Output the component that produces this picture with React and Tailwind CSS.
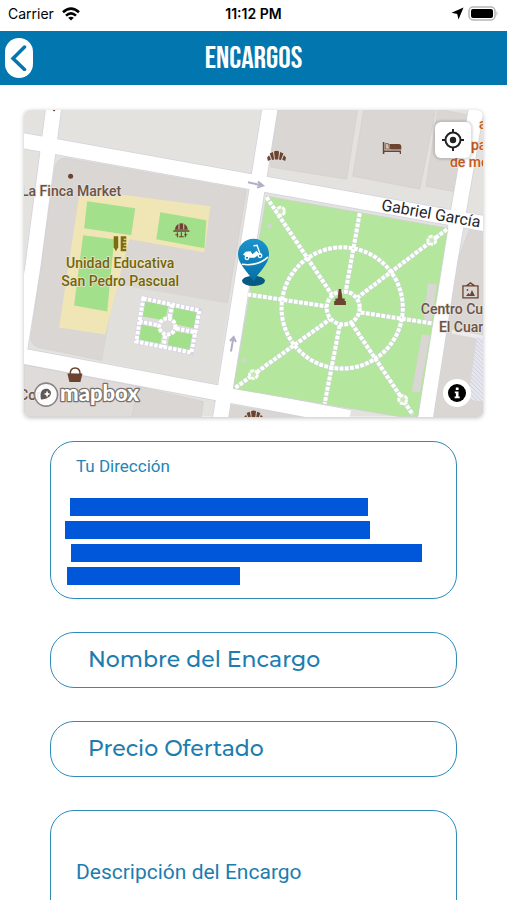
import React from 'react';

const BLOCK = '#dad6d4';
const GREEN = '#a3e08c';

const parkPaths = [
  'M267 197L332 294',
  'M447 229L358 297',
  'M360 213L346 291',
  'M248 294L327 306',
  'M361 312L433 323',
  'M236 387L330 319',
  'M352 323L413 414',
  'M340 325L325 403',
];

const parkLoops = [
  [281, 211],
  [432, 240],
  [254, 374],
  [403, 399],
];

function Croissant({ x, y }) {
  return (
    <g transform={`translate(${x} ${y})`} fill="#6b432e">
      <path d="M-2.5 -4.5Q0 -6 2.5 -4.5L1.6 3.5H-1.6Z" />
      <path d="M-6.8 -2.6L-3.6 -4L-2.4 3.5L-4.4 4Z" />
      <path d="M6.8 -2.6L3.6 -4L2.4 3.5L4.4 4Z" />
      <path d="M-9.4 1.4L-7.4 -.8L-5.6 3.4L-8.6 5Z" />
      <path d="M9.4 1.4L7.4 -.8L5.6 3.4L8.6 5Z" />
    </g>
  );
}

function MapDrawing() {
  return (
    <svg viewBox="25 110 458 306" className="block h-auto w-full" role="img" aria-label="Mapa">
      <defs>
        <pattern id="hatch" width="3" height="3" patternUnits="userSpaceOnUse" patternTransform="rotate(-45)">
          <rect width="3" height="3" fill="#e6e6ee" />
          <path d="M0 0V3" stroke="#cfcfdf" strokeWidth="1.4" />
        </pattern>
        <linearGradient id="pin" x1="0" y1="0" x2="0" y2="1">
          <stop offset="0" stopColor="#1c93cb" />
          <stop offset="1" stopColor="#0670a8" />
        </linearGradient>
      </defs>

      <rect x="25" y="110" width="458" height="306" fill="#e3e2df" />

      {/* city blocks */}
      <g fill={BLOCK} stroke="#d2cecd" strokeWidth=".6">
        <path d="M277 109H358L347 179L271 167Z" />
        <path d="M364 109H436L420 189L353 176Z" />
        <path d="M438 109L468 115L457 192L426 186Z" />
        <path d="M67 158L247 190L228 303L116 286L103 360L40 347Q31 345 32 336L56 167Q58 158 67 158Z" />
        <path d="M116 284L229 303L217 387L103 360Z" fill="#e1dfdc" stroke="none" />
        <path d="M25 364L139 386L133 416H25Z" fill="#dedbd9" />
        <path d="M139 386L204 401L202 416H133Z" />
        <path d="M228 404L302 416H226Z" />
        <path d="M470 228L483 231V416H433L457 262Z" />
      </g>
      <path d="M452 331L483 337" stroke="#ececee" strokeWidth="4" />
      <path d="M477 337L483 338V401L468 399Z" fill="url(#hatch)" />

      {/* school grounds */}
      <path d="M81 189L211 206L205 252L130 239L118 286L106 334L60 327Z" fill="#f0e5b4" />
      <g fill={GREEN}>
        <path d="M88 201L136 208L132 235L85 228Z" />
        <path d="M161 212L207 220L205 248L157 239Z" />
        <path d="M84 235L115 239L108 311L75 305Z" />
      </g>

      {/* streets */}
      <g stroke="#d3d2dc" strokeWidth="16.5" fill="none">
        <path d="M55 105L34 265L19 360" />
        <path d="M20 140L488 224" />
        <path d="M271 105L221 418" />
        <path d="M20 355L350 417" />
        <path d="M477 105L450 260L425 420" />
      </g>
      <g stroke="#fff" strokeWidth="15" fill="none">
        <path d="M55 105L34 265L19 360" />
        <path d="M20 140L488 224" />
        <path d="M271 105L221 418" />
        <path d="M20 355L350 417" />
        <path d="M477 105L450 260L425 420" />
      </g>

      {/* small garden */}
      <g fill={GREEN}>
        <path d="M146 301L169 305L166 320L143 316Z" />
        <path d="M175 306L198 311L195 328L172 323Z" />
        <path d="M142 324L164 328L161 344L139 340Z" />
        <path d="M171 330L194 334L190 350L168 346Z" />
      </g>
      <circle cx="168" cy="326" r="9" fill="#dddbe3" />
      <path
        d="M144 298L200 310L192 352L137 341ZM173 304L164 347M140 321L197 332"
        fill="none"
        stroke="#d5d3e2"
        strokeWidth="5"
      />
      <g fill="none" stroke="#fff" strokeWidth="4" strokeDasharray="3.4 1.4">
        <path d="M144 298L200 310L192 352L137 341ZM173 304L170 318M166 335L164 347M140 321L160 325M177 328L197 332" />
        <circle cx="168" cy="326" r="8" />
      </g>
      <circle cx="168" cy="326" r="6" fill="#dddbd9" />

      {/* park */}
      <path d="M267 196L448 228L418 416H400L234 388Z" fill="#b4e69e" stroke="#c9d3c9" strokeWidth=".8" />
      <path d="M428 283L437 284L431 323L424 321Z" fill={BLOCK} />
      <path d="M422 334L430 335L420 392L412 391Z" fill={BLOCK} />
      <g fill="none" stroke="#c6dac9" strokeWidth="4.8">
        {parkPaths.map((d) => (
          <path key={d} d={d} />
        ))}
        <circle cx="342.5" cy="307.5" r="60.5" />
        <circle cx="343.5" cy="307.5" r="16.5" />
      </g>
      <g fill="none" stroke="#fff" strokeWidth="4" strokeDasharray="3.8 1.4">
        {parkPaths.map((d) => (
          <path key={d} d={d} />
        ))}
        <circle cx="342.5" cy="307.5" r="60.5" />
        <circle cx="343.5" cy="307.5" r="16.5" />
      </g>
      {parkLoops.map(([x, y]) => (
        <circle key={x} cx={x} cy={y} r="4" fill="#c8e8bb" stroke="#fff" strokeWidth="2.8" strokeDasharray="4 1" />
      ))}
      <circle cx="270" cy="226" r="2.4" fill="#cfd6cf" />
      <circle cx="245" cy="360" r="2.4" fill="#cfd6cf" />

      {/* one-way arrows */}
      <g fill="none" stroke="#b3aec6" strokeWidth="2">
        <path d="M248.500 182L263 185.500M258.500 181.500L263.500 185.500L257.500 187.500" />
        <path d="M231.500 351L234 337M230.500 340.500L234.200 336.500L236.500 341.500" />
      </g>

      {/* places */}
      <Croissant x={277} y={156} />
      <Croissant x={254} y={415} />
      <g fill="#6b432e">
        <circle cx="71.500" cy="176" r="2.500" />
        <circle cx="55" cy="110" r="1.200" />
        <path d="M383 142h1.600v8.500h16.600v3.500h-1.300v-2.100h-15.300v2.100H383ZM389.500 144H399Q401.500 144 401.500 147v2.500H390.500Z" />
        <path d="M385.500 143.500h3l1.500 5.500h-4.500Z" fill="#cdbfb4" stroke="#6b432e" strokeWidth=".7" />
        <path d="M339 288.500h2.600l1 9.500h2.400v2.500h1.200v4.200h-11.700v-4.200h1.200v-2.500h2.300Z" />
        <path d="M68.300 373h15l-2 8.500h-11Z" />
        <path d="M71 374Q71 367.500 76 367.500T81 374" fill="none" stroke="#6b432e" strokeWidth="1.500" />
        <path d="M463 285.500h15v12h-15ZM466.500 285.500L470.500 282.500L474.500 285.500" fill="none" stroke="#6b432e" strokeWidth="1.300" />
        <path d="M466 295.500l2.500-3 1.500 1.800 2-4.800 3 6Z" />
        <circle cx="467.500" cy="289.500" r=".9" />
      </g>
      <g fill="#6b432e">
        <path d="M175.500 229.500Q176.500 223 182 223T188.500 229.500Z" />
        <path d="M179.600 223.500V229M184.400 223.500V229" stroke="#e8dfce" strokeWidth=".9" />
        <path d="M174 230H190V231.500H174Z" />
        <path d="M178 232v5M186 232v5M182 232v4M176 234.500h3M185 234.500h3M179.500 236.500h5" stroke="#6b432e" strokeWidth="1.100" />
      </g>
      <g fill="#7d6c0c">
        <path d="M114.500 236H119V247L116.700 251L114.500 247Z" />
        <path d="M121.500 236H127V251H121.500Z" />
        <path d="M124.500 239H127M123.500 242H127M124.500 245H127M123.500 248H127" stroke="#f0e5b4" strokeWidth="1" />
      </g>

      {/* labels */}
      <g fontFamily="Roboto, sans-serif" fontWeight="500" fontSize="14" paintOrder="stroke" strokeLinejoin="round">
        <g fill="#6b5346" stroke="#e8e4e1" strokeWidth="1.500">
          <text x="22" y="196">La Finca Market</text>
          <text x="421" y="314">Centro Cultural</text>
          <text x="439" y="332">El Cuartel</text>
          <text x="20" y="399">Com</text>
        </g>
        <g fill="#736510" stroke="#ece6cf" strokeWidth="1.500" textAnchor="middle">
          <text x="121" y="268">Unidad Educativa</text>
          <text x="121" y="286">San Pedro Pascual</text>
        </g>
        <g fill="#c35a20" stroke="#f0e8e2" strokeWidth="1.500">
          <text x="479" y="129">ar</text>
          <text x="471" y="150">para</text>
          <text x="450" y="167">de motos</text>
        </g>
        <text
          transform="translate(381 210) rotate(10)"
          fontSize="16"
          fontWeight="400"
          fill="#26262b"
          stroke="#fff"
          strokeWidth="2"
        >
          Gabriel García
        </text>
      </g>

      {/* delivery pin */}
      <ellipse cx="254" cy="280.500" rx="11.500" ry="5.200" fill="#075a82" />
      <path d="M238.500 254A15.500 15.500 0 1 1 269.500 254C269.500 264 259 272 254 281C249 272 238.500 264 238.500 254Z" fill="url(#pin)" />
      <g fill="none" stroke="#fff" strokeLinecap="round">
        <path d="M243 264Q258 266 268 257" strokeWidth="1.600" />
        <circle cx="247.500" cy="257.500" r="1.800" strokeWidth="1.300" />
        <circle cx="260.500" cy="255.500" r="1.800" strokeWidth="1.300" />
        <path d="M254.500 245.500L257.500 245L260.500 253.500" strokeWidth="1.400" />
      </g>
      <path d="M243.500 254.500L246 251.500L251 251L253 254L257 250.500L260 254L255 257.500H250Z" fill="#fff" />

      {/* map provider mark */}
      <g>
        <circle cx="47" cy="394" r="11.500" fill="#fff" fillOpacity=".9" stroke="#8a8481" strokeWidth="1.600" />
        <path d="M42 399C40 391 44 387 49 388.500C54 391 53 398 42 399Z" fill="#5f5854" />
        <path d="M48 390l1 2.400 2.400 1-2.400 1-1 2.400-1-2.400-2.400-1 2.400-1Z" fill="#fff" />
        <text
          x="61"
          y="400"
          fontFamily="Lato, sans-serif"
          fontWeight="900"
          fontSize="22"
          fill="#fff"
          stroke="#77716e"
          strokeWidth="2.500"
          paintOrder="stroke"
          strokeLinejoin="round"
        >
          mapbox
        </text>
      </g>
    </svg>
  );
}

function StatusBar() {
  return (
    <div className="grid h-[31px] shrink-0 grid-cols-3 items-center px-2 pb-1 font-[Inter,sans-serif] text-black">
      <div className="flex items-center gap-2 text-sm">
        <span>Carrier</span>
        <svg width="18" height="14" viewBox="0 0 18 14" fill="none" stroke="#000" strokeWidth="2.600">
          <path d="M1 5.200Q9 -2 17 5.200" />
          <path d="M4 8.600Q9 4 14 8.600" />
          <path d="M9 13.500L6.200 10.700Q9 8.600 11.800 10.700Z" fill="#000" stroke="none" />
        </svg>
      </div>
      <span className="text-center text-sm font-semibold">11:12 PM</span>
      <div className="flex items-center justify-end gap-1">
        <svg width="13" height="13" viewBox="0 0 13 13">
          <path d="M12.500 .5L7.500 12.500L6.200 7L.5 5.800Z" fill="#000" />
        </svg>
        <svg width="31" height="15" viewBox="0 0 31 15">
          <rect x="1" y="1" width="26" height="13" rx="4" fill="#fff" stroke="#b5b5b5" strokeWidth="1.500" />
          <rect x="3" y="3" width="22" height="9" rx="2" fill="#000" />
          <path d="M28.500 5Q30.500 7.500 28.500 10Z" fill="#b5b5b5" />
        </svg>
      </div>
    </div>
  );
}

function Header() {
  return (
    <header className="grid h-[54px] shrink-0 grid-cols-[40px_1fr_40px] items-center bg-[#0276ae]">
      <button type="button" aria-label="Volver" className="ml-[5px] flex h-10 w-7 items-center justify-center rounded-full bg-white">
        <svg width="18" height="26" viewBox="0 0 18 26" fill="none" stroke="#0276ae" strokeWidth="3.500" strokeLinecap="round">
          <path d="M14.500 2L3 13.500L14.500 24.500" />
        </svg>
      </button>
      <h1 className="text-center font-['Bebas_Neue',Roboto,sans-serif] text-[31px] leading-none font-normal text-white">
        ENCARGOS
      </h1>
    </header>
  );
}

function MapCard() {
  return (
    <section className="relative mx-6 overflow-hidden rounded-md shadow-[0_1px_4px_rgba(0,0,0,0.25)]">
      <MapDrawing />
      <button
        type="button"
        aria-label="Mi ubicación"
        className="absolute top-3 right-3 flex size-9 items-center justify-center rounded-md bg-white shadow-[0_0_2px_2px_rgba(0,0,0,0.12)]"
      >
        <svg width="22" height="22" viewBox="0 0 22 22" fill="none" stroke="#222" strokeWidth="2">
          <circle cx="11" cy="11" r="7.500" />
          <circle cx="11" cy="11" r="3.200" fill="#222" stroke="none" />
          <path d="M11 0V4M11 18V22M0 11H4M18 11H22" />
        </svg>
      </button>
      <button
        type="button"
        aria-label="Información del mapa"
        className="absolute right-3 bottom-2.5 flex size-7 items-center justify-center rounded-full bg-white"
      >
        <svg width="18" height="18" viewBox="0 0 18 18">
          <circle cx="9" cy="9" r="9" fill="#000" />
          <path d="M7.800 3.500h2.800v2.500H7.800ZM6.800 7.500h3.700v5h1.200v1.800H6.600v-1.800h1.300V9.200H6.800Z" fill="#fff" />
        </svg>
      </button>
    </section>
  );
}

function AddressCard() {
  return (
    <section className="rounded-3xl border border-[#2f8bb8] px-[14px] pt-3 pb-[13px] font-[Roboto,sans-serif]">
      <h2 className="ml-[11px] text-[17px] leading-6 text-[#2385b7]">Tu Dirección</h2>
      <div className="mt-5 flex flex-col gap-[5px]">
        <div className="ml-[5px] h-[18px] w-[79%] bg-[#0057d9]" />
        <div className="h-[18px] w-[81%] bg-[#0057d9]" />
        <div className="ml-[6px] h-[18px] w-[93%] bg-[#0057d9]" />
        <div className="ml-[2px] h-[18px] w-[46%] bg-[#0057d9]" />
      </div>
    </section>
  );
}

function Field({ label }) {
  return (
    <input
      type="text"
      aria-label={label}
      placeholder={label}
      className="h-14 w-full rounded-3xl border border-[#2f8bb8] bg-white px-[37px] font-[Montserrat,Inter,sans-serif] text-[22px] font-medium text-[#1c7dae] outline-none placeholder:text-[#1c7dae]"
    />
  );
}

export default function App() {
  return (
    <div className="flex h-screen flex-col overflow-hidden bg-white">
      <StatusBar />
      <Header />
      <main className="min-h-0 flex-1 overflow-y-auto pt-[25px] [scrollbar-width:none]">
        <MapCard />
        <form className="mx-[50px] mt-6 flex flex-col gap-[33px]">
          <AddressCard />
          <Field label="Nombre del Encargo" />
          <Field label="Precio Ofertado" />
          <textarea
            aria-label="Descripción del Encargo"
            placeholder="Descripción del Encargo"
            className="h-40 w-full resize-none rounded-3xl border border-[#2f8bb8] bg-white px-[25px] pt-[46px] font-[Roboto,sans-serif] text-[21px] text-[#1c7dae] outline-none placeholder:text-[#1c7dae]"
          />
        </form>
      </main>
    </div>
  );
}
